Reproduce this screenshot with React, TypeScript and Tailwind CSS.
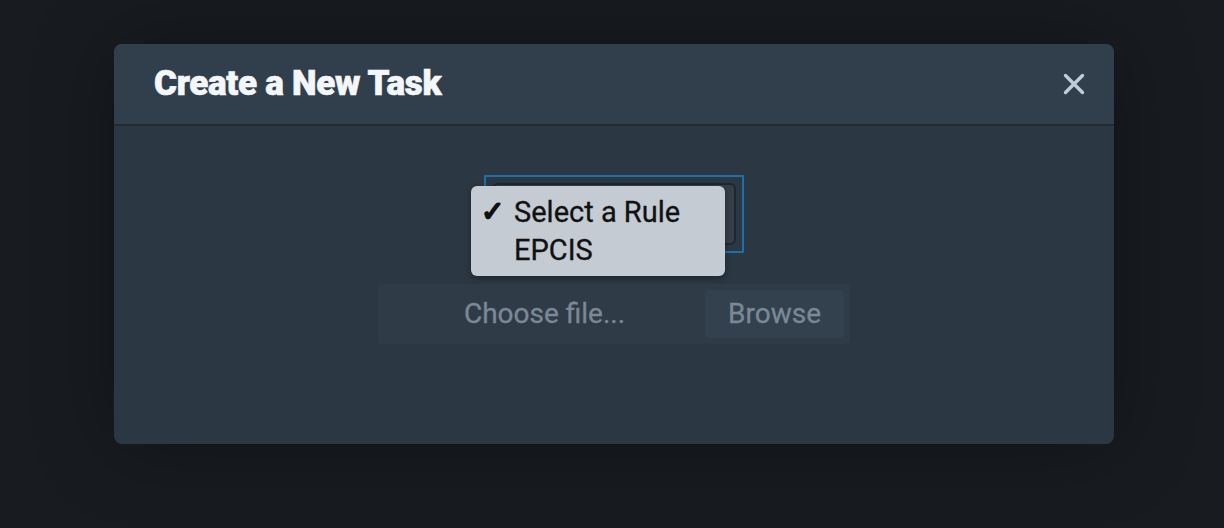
export default function App() {
    return (
        <div
            className="flex h-[528px] w-full justify-center bg-[#181c20] pl-1 pt-[44px]"
            style={{ fontFamily: 'Roboto, "Liberation Sans", sans-serif' }}
        >
            <div className="flex h-[400px] w-[1000px] flex-col rounded-lg bg-[#2b3742] shadow-[0_0_80px_rgba(0,0,0,0.35)]">
                {/* Header */}
                <div className="flex h-[82px] shrink-0 items-center justify-between rounded-t-lg border-b-2 border-[#222b33] bg-[#313f4c] pl-10 pr-[29px]">
                    <h1 className="text-[35px] font-black tracking-[-0.3px] text-[#f4f7fa] [-webkit-text-stroke:0.6px_#f4f7fa]">
                        Create a New Task
                    </h1>
                    <svg
                        width="22"
                        height="22"
                        viewBox="0 0 22 22"
                        className="text-[#c1ccd6]"
                    >
                        <path
                            d="M2.5 2.5L19.5 19.5M19.5 2.5L2.5 19.5"
                            stroke="currentColor"
                            strokeWidth="3.4"
                            strokeLinecap="round"
                        />
                    </svg>
                </div>

                {/* Body */}
                <div className="flex flex-1 flex-col items-center pt-[49px]">
                    {/* Rule select */}
                    <div className="relative">
                        <div className="rounded-[1px] border-2 border-[#1d70aa] p-[6px]">
                            <div className="h-[62px] w-[244px] rounded-md border-2 border-[#1f262d] bg-[#353f4a]" />
                        </div>
                        <div className="absolute left-[-13px] top-[11px] w-[254px] rounded-md bg-[#c4cbd2] py-[7px] text-[29px] leading-[38px] text-[#111] shadow-[0_2px_6px_rgba(0,0,0,0.35)] [-webkit-text-stroke:0.3px_#111]">
                            <div className="flex items-center">
                                <span className="w-[43px] pl-[10px] text-[28px] font-bold [-webkit-text-stroke:0.8px_#111]">
                                    ✓
                                </span>
                                Select a Rule
                            </div>
                            <div className="pl-[43px]">EPCIS</div>
                        </div>
                    </div>

                    {/* File input */}
                    <div className="mt-[31px] flex h-[60px] w-[472px] items-center rounded bg-[#2f3c48] p-[6px] [-webkit-text-stroke:0.3px_#7b8896]">
                        <div className="flex-1 text-center text-[28px] text-[#7b8896]">
                            Choose file...
                        </div>
                        <div className="flex h-[48px] w-[139px] items-center justify-center rounded bg-[#33414e] text-[28px] text-[#7b8896]">
                            Browse
                        </div>
                    </div>
                </div>
            </div>
        </div>
    );
}
